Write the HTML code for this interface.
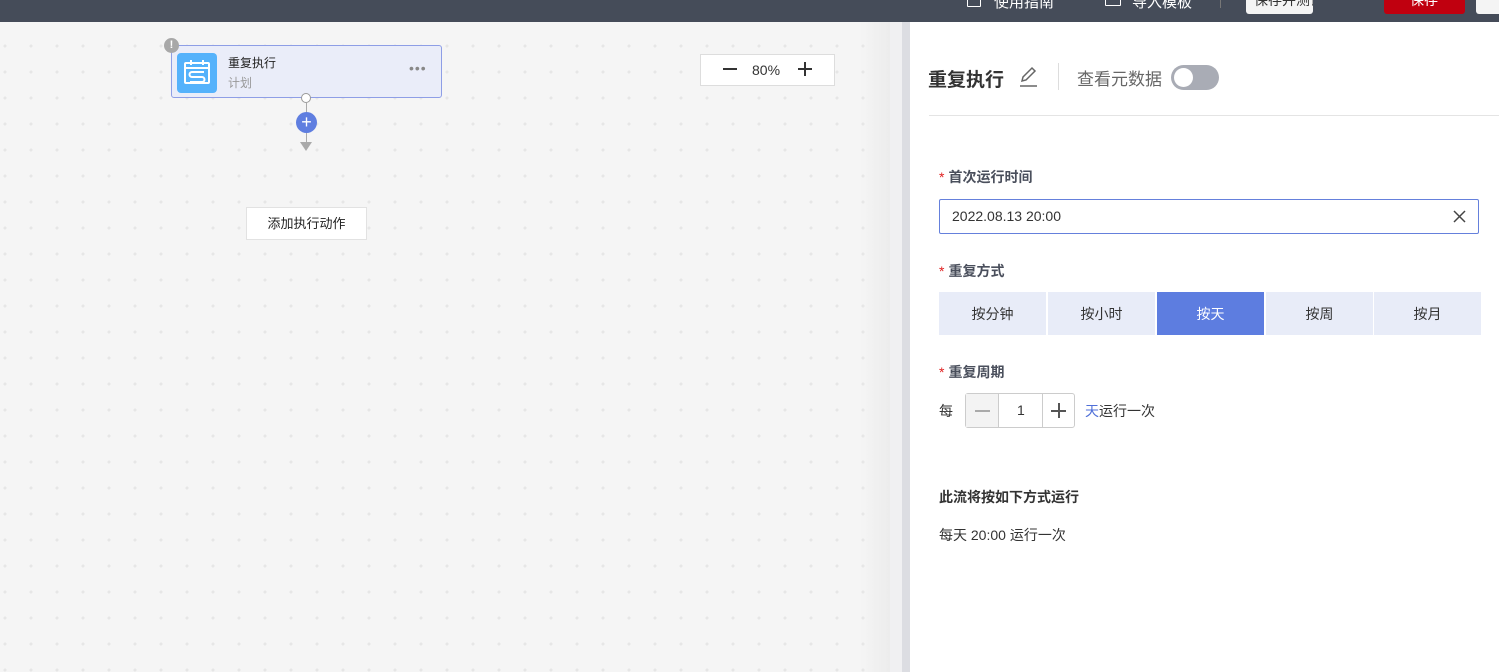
<!DOCTYPE html>
<html><head><meta charset="utf-8"><style>
*{box-sizing:border-box;margin:0;padding:0}
body{width:1499px;height:672px;overflow:hidden;position:relative;font-family:"Liberation Sans","Noto Sans CJK SC",sans-serif;background:#f5f5f5;color:#333}
.top{position:absolute;left:0;top:0;width:1499px;height:22px;background:#454c59;overflow:hidden}
.canvas{position:absolute;left:0;top:22px;width:890px;height:650px;background-color:#f5f5f5;background-image:radial-gradient(circle,#e6e6e6 1.3px,transparent 1.8px);background-size:26px 26px;background-position:-8px -15px}
.shade{position:absolute;left:860px;top:22px;width:30px;height:650px;background:linear-gradient(90deg,rgba(240,240,240,0),#ececec)}
.strip1{position:absolute;left:890px;top:22px;width:12px;height:650px;background:#f0f0f2}
.strip2{position:absolute;left:902px;top:22px;width:8px;height:650px;background:#dcdde2}
.panel{position:absolute;left:910px;top:22px;width:589px;height:650px;background:#fff}
.abs{position:absolute}
.lbl{position:absolute;left:29px;font-size:14px;font-weight:bold;color:#4a4f5c}
.lbl b{color:#e02020;font-weight:normal;margin-right:4px}
.seg{position:absolute;top:270px;height:43px;width:107px;background:#e8ecf8;font-size:14px;color:#333;display:flex;align-items:center;justify-content:center}
.tt{position:absolute;top:-9px;font-size:15px;color:#fff}
</style></head><body>
<div class="top">
 <div class="abs" style="left:967px;top:-6px;width:14px;height:13px;border:1.5px solid #fff;border-radius:1px"></div>
 <div class="tt" style="left:994px">使用指南</div>
 <div class="abs" style="left:1105px;top:-6px;width:16px;height:12px;border:1.5px solid #fff;border-radius:1px"></div>
 <div class="tt" style="left:1132px">导入模板</div>
 <div class="abs" style="left:1220px;top:0;width:1px;height:8px;background:#777"></div>
 <div class="abs" style="left:1246px;top:-4px;width:67px;height:18px;background:#f4f4f4;border-radius:3px;overflow:hidden"><div class="abs" style="left:8px;top:-6px;font-size:14px;color:#333;white-space:nowrap">保存并测试</div></div>
 <div class="abs" style="left:1384px;top:-4px;width:81px;height:18px;background:#c0000f;border-radius:3px;overflow:hidden"><div class="abs" style="left:26px;top:-6px;font-size:14px;color:#fff">保存</div></div>
 <div class="abs" style="left:1476px;top:-4px;width:30px;height:18px;background:#f4f4f4;border-radius:3px"></div>
</div>
<div class="canvas">
 <div class="abs" style="left:171px;top:23px;width:271px;height:53px;background:#eaedf9;border:1px solid #8e9ee6;border-radius:3px"></div>
 <div class="abs" style="left:177px;top:31px;width:40px;height:40px;background:#55b2fb;border-radius:4px">
  <svg width="40" height="40" viewBox="0 0 40 40"><rect x="8" y="10" width="24" height="20" rx="1" fill="none" stroke="#fff" stroke-width="2"/><line x1="8" y1="15" x2="32" y2="15" stroke="#fff" stroke-width="2"/><line x1="14" y1="7" x2="14" y2="12" stroke="#fff" stroke-width="2"/><line x1="26" y1="7" x2="26" y2="12" stroke="#fff" stroke-width="2"/><path d="M27 19H15a2.5 2.5 0 0 0 0 5h10a2.5 2.5 0 0 1 0 5H13" fill="none" stroke="#fff" stroke-width="2"/></svg>
 </div>
 <div class="abs" style="left:164px;top:16px;width:15px;height:15px;border-radius:50%;background:#a8a8a8;color:#fff;font-size:11px;font-weight:bold;text-align:center;line-height:15px">!</div>
 <div class="abs" style="left:228px;top:32px;font-size:12px;color:#222">重复执行</div>
 <div class="abs" style="left:228px;top:52px;font-size:12px;color:#999">计划</div>
 <div class="abs" style="left:409px;top:38px;font-size:14px;color:#888;letter-spacing:1px">•••</div>
 <div class="abs" style="left:301px;top:71px;width:10px;height:10px;border-radius:50%;background:#fff;border:1px solid #999"></div>
 <div class="abs" style="left:306px;top:81px;width:1px;height:40px;background:#aaa"></div>
 <div class="abs" style="left:296px;top:90px;width:21px;height:21px;border-radius:50%;background:#5f7ee0;color:#fff;font-size:18px;text-align:center;line-height:20px">+</div>
 <div class="abs" style="left:300px;top:120px;width:0;height:0;border-left:6px solid transparent;border-right:6px solid transparent;border-top:9px solid #aaa"></div>
 <div class="abs" style="left:246px;top:185px;width:121px;height:33px;background:#fff;border:1px solid #e2e2e2;font-size:13px;color:#222;text-align:center;line-height:31px">添加执行动作</div>
 <div class="abs" style="left:700px;top:32px;width:135px;height:32px;background:#fff;border:1px solid #ddd;font-size:14px;color:#333">
  <span class="abs" style="left:22px;top:13px;width:14px;height:1.5px;background:#333"></span>
  <span class="abs" style="left:51px;top:7px">80%</span>
  <span class="abs" style="left:97px;top:13px;width:14px;height:1.5px;background:#333"></span>
  <span class="abs" style="left:103px;top:7px;width:1.5px;height:14px;background:#333"></span>
 </div>
</div>
<div class="shade"></div><div class="strip1"></div><div class="strip2"></div>
<div class="panel">
 <div class="abs" style="left:18px;top:43px;font-size:19px;font-weight:bold;color:#333">重复执行</div>
 <svg class="abs" style="left:108px;top:42px" width="22" height="24" viewBox="0 0 22 24"><path d="M4 17l1-4 9-9 3 3-9 9z" fill="none" stroke="#666" stroke-width="1.5"/><line x1="2" y1="22" x2="19" y2="22" stroke="#666" stroke-width="1.5"/></svg>
 <div class="abs" style="left:148px;top:41px;width:1px;height:27px;background:#ddd"></div>
 <div class="abs" style="left:167px;top:43px;font-size:17px;color:#666">查看元数据</div>
 <div class="abs" style="left:261px;top:43px;width:48px;height:25px;border-radius:13px;background:#a9acb5"><div class="abs" style="left:3px;top:3px;width:19px;height:19px;border-radius:50%;background:#fff"></div></div>
 <div class="abs" style="left:19px;top:93px;width:570px;height:1px;background:#e4e4e4"></div>
 <div class="lbl" style="top:145px"><b>*</b>首次运行时间</div>
 <div class="abs" style="left:29px;top:177px;width:540px;height:35px;border:1px solid #6580dc;border-radius:2px;font-size:14px;color:#333;padding:8px 12px">2022.08.13 20:00
  <svg class="abs" style="right:12px;top:10px" width="13" height="13" viewBox="0 0 13 13"><path d="M1 1L12 12M12 1L1 12" stroke="#444" stroke-width="1.5"/></svg></div>
 <div class="lbl" style="top:239px"><b>*</b>重复方式</div>
 <div class="seg" style="left:29px">按分钟</div>
 <div class="seg" style="left:138px">按小时</div>
 <div class="seg" style="left:247px;background:#5d7de0;color:#fff">按天</div>
 <div class="seg" style="left:356px">按周</div>
 <div class="seg" style="left:464px">按月</div>
 <div class="lbl" style="top:340px"><b>*</b>重复周期</div>
 <div class="abs" style="left:29px;top:379px;font-size:14px;color:#333">每</div>
 <div class="abs" style="left:55px;top:371px;width:110px;height:35px;border:1px solid #ccc;border-radius:3px;background:#fff">
  <div class="abs" style="left:0;top:0;width:33px;height:33px;background:#f3f3f3;border-right:1px solid #ccc"><span class="abs" style="left:9px;top:16px;width:15px;height:1.5px;background:#aaa"></span></div>
  <span class="abs" style="left:51px;top:8px;font-size:14px;color:#333">1</span>
  <div class="abs" style="left:76px;top:0;width:1px;height:33px;background:#ccc"></div>
  <span class="abs" style="left:85px;top:16px;width:15px;height:1.5px;background:#555"></span>
  <span class="abs" style="left:92px;top:9px;width:1.5px;height:15px;background:#555"></span>
 </div>
 <div class="abs" style="left:175px;top:379px;font-size:14px;color:#333"><span style="color:#4f6fd8">天</span>运行一次</div>
 <div class="abs" style="left:29px;top:465px;font-size:14px;font-weight:bold;color:#333">此流将按如下方式运行</div>
 <div class="abs" style="left:29px;top:503px;font-size:14px;color:#333">每天 20:00 运行一次</div>
</div>
</body></html>
